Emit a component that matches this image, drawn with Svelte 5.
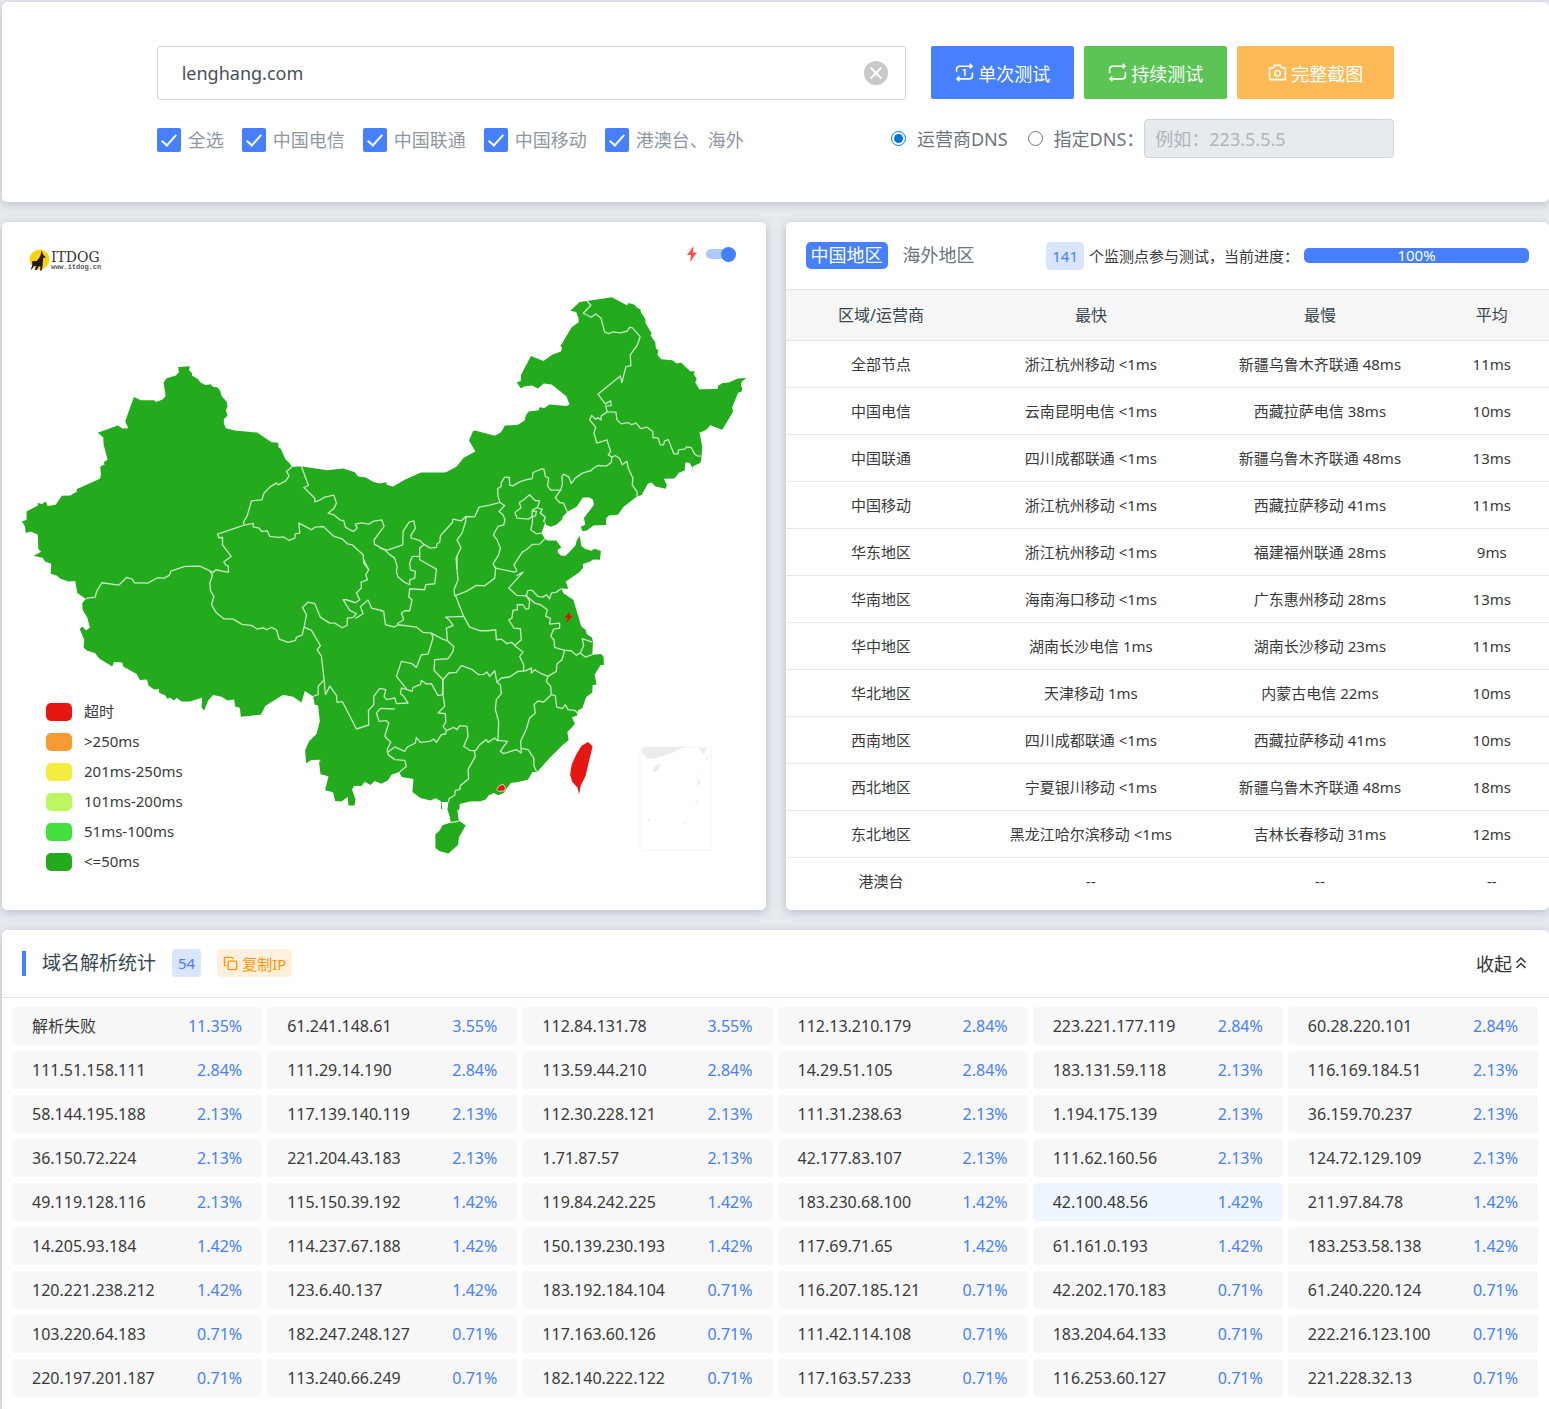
<script lang="ts">
  let domain = 'lenghang.com';
  let dnsMode = 'isp';
  let customDns = '';
  let markers = true;
  let area = 'cn';
  let collapsed = false;

  let lines = [
    { name: '全选', checked: true },
    { name: '中国电信', checked: true },
    { name: '中国联通', checked: true },
    { name: '中国移动', checked: true },
    { name: '港澳台、海外', checked: true },
  ];

  const legend = [
    { label: '超时', color: '#e61610' },
    { label: '>250ms', color: '#f79a33' },
    { label: '201ms-250ms', color: '#f5ed42' },
    { label: '101ms-200ms', color: '#bdf760' },
    { label: '51ms-100ms', color: '#42e03f' },
    { label: '<=50ms', color: '#24aa1d' },
  ];

  const regions = [
    ['全部节点', '浙江杭州移动 <1ms', '新疆乌鲁木齐联通 48ms', '11ms'],
    ['中国电信', '云南昆明电信 <1ms', '西藏拉萨电信 38ms', '10ms'],
    ['中国联通', '四川成都联通 <1ms', '新疆乌鲁木齐联通 48ms', '13ms'],
    ['中国移动', '浙江杭州移动 <1ms', '西藏拉萨移动 41ms', '11ms'],
    ['华东地区', '浙江杭州移动 <1ms', '福建福州联通 28ms', '9ms'],
    ['华南地区', '海南海口移动 <1ms', '广东惠州移动 28ms', '13ms'],
    ['华中地区', '湖南长沙电信 1ms', '湖南长沙移动 23ms', '11ms'],
    ['华北地区', '天津移动 1ms', '内蒙古电信 22ms', '10ms'],
    ['西南地区', '四川成都联通 <1ms', '西藏拉萨移动 41ms', '10ms'],
    ['西北地区', '宁夏银川移动 <1ms', '新疆乌鲁木齐联通 48ms', '18ms'],
    ['东北地区', '黑龙江哈尔滨移动 <1ms', '吉林长春移动 31ms', '12ms'],
    ['港澳台', '--', '--', '--'],
  ];

  const records = [
    ['解析失败', '11.35%'], ['61.241.148.61', '3.55%'], ['112.84.131.78', '3.55%'],
    ['112.13.210.179', '2.84%'], ['223.221.177.119', '2.84%'], ['60.28.220.101', '2.84%'],
    ['111.51.158.111', '2.84%'], ['111.29.14.190', '2.84%'], ['113.59.44.210', '2.84%'],
    ['14.29.51.105', '2.84%'], ['183.131.59.118', '2.13%'], ['116.169.184.51', '2.13%'],
    ['58.144.195.188', '2.13%'], ['117.139.140.119', '2.13%'], ['112.30.228.121', '2.13%'],
    ['111.31.238.63', '2.13%'], ['1.194.175.139', '2.13%'], ['36.159.70.237', '2.13%'],
    ['36.150.72.224', '2.13%'], ['221.204.43.183', '2.13%'], ['1.71.87.57', '2.13%'],
    ['42.177.83.107', '2.13%'], ['111.62.160.56', '2.13%'], ['124.72.129.109', '2.13%'],
    ['49.119.128.116', '2.13%'], ['115.150.39.192', '1.42%'], ['119.84.242.225', '1.42%'],
    ['183.230.68.100', '1.42%'], ['42.100.48.56', '1.42%'], ['211.97.84.78', '1.42%'],
    ['14.205.93.184', '1.42%'], ['114.237.67.188', '1.42%'], ['150.139.230.193', '1.42%'],
    ['117.69.71.65', '1.42%'], ['61.161.0.193', '1.42%'], ['183.253.58.138', '1.42%'],
    ['120.221.238.212', '1.42%'], ['123.6.40.137', '1.42%'], ['183.192.184.104', '0.71%'],
    ['116.207.185.121', '0.71%'], ['42.202.170.183', '0.71%'], ['61.240.220.124', '0.71%'],
    ['103.220.64.183', '0.71%'], ['182.247.248.127', '0.71%'], ['117.163.60.126', '0.71%'],
    ['111.42.114.108', '0.71%'], ['183.204.64.133', '0.71%'], ['222.216.123.100', '0.71%'],
    ['220.197.201.187', '0.71%'], ['113.240.66.249', '0.71%'], ['182.140.222.122', '0.71%'],
    ['117.163.57.233', '0.71%'], ['116.253.60.127', '0.71%'], ['221.228.32.13', '0.71%'],
  ];

  let activeIp = '42.100.48.56';
</script>

<div class="page">
  <section class="card search">
    <div class="search-row">
      <div class="domain">
        <input type="text" aria-label="域名" bind:value={domain} />
        <button class="clear" aria-label="清空" on:click={() => (domain = '')}>
          <svg viewBox="0 0 24 24"><circle cx="12" cy="12" r="12" fill="#c8c8c8" /><path d="M6.500 6.500l11 11M17.500 6.500l-11 11" stroke="#fff" stroke-width="2" /></svg>
        </button>
      </div>
      <div class="buttons">
        <button class="btn blue">
          <svg class="icon" viewBox="0 0 24 24"><path d="M2 11V8a4 4 0 0 1 4-4h15M18.500 1l3 3-3 3M22 12v4a4 4 0 0 1-4 4H3M5.500 17l-3 3 3 3M10 9.500l2.500-1V16" /></svg>单次测试
        </button>
        <button class="btn green">
          <svg class="icon" viewBox="0 0 24 24"><path d="M2 13V8a4 4 0 0 1 4-4h15M18.500 1l3 3-3 3M22 11v5a4 4 0 0 1-4 4H3M5.500 17l-3 3 3 3" /></svg>持续测试
        </button>
        <button class="btn orange">
          <svg class="icon" viewBox="0 0 24 24"><path d="M8.500 3h7l2 3H21a1 1 0 0 1 1 1V20a1 1 0 0 1-1 1H3a1 1 0 0 1-1-1V7a1 1 0 0 1 1-1h3.500z" /><circle cx="12" cy="13" r="3.500" /></svg>完整截图
        </button>
      </div>
    </div>
    <div class="option-row">
      <div class="checks">
        {#each lines as line}
          <label class="check"><input type="checkbox" bind:checked={line.checked} />{line.name}</label>
        {/each}
      </div>
      <div class="dns">
        <label class="radio"><input type="radio" name="dns" value="isp" bind:group={dnsMode} />运营商DNS</label>
        <label class="radio"><input type="radio" name="dns" value="custom" bind:group={dnsMode} />指定DNS：</label>
        <input class="dns-input" type="text" aria-label="指定DNS" placeholder="例如：223.5.5.5" disabled={dnsMode === 'isp'} bind:value={customDns} />
      </div>
    </div>
  </section>

  <div class="columns">
    <section class="card map-card">
      <svg class="map" viewBox="2 222 764 688" role="img" aria-label="中国地图">
        <!-- logo -->
        <circle cx="39.500" cy="259.500" r="10" fill="#fbd20b" />
        <path transform="translate(20 240) scale(.33333)" d="M65 31L62 45 57 55 50 63 36 64 37 76 32 90 38 85 42 78 49 77 44 90 50 90 57 78 61 80 61 93 66 91 68 75 69 60 70 53 78 53 70 44 67 38z" fill="#231815" />
        <text class="logo-name" x="51" y="262">ITDOG</text>
        <text class="logo-url" x="51" y="269">www.itdog.cn</text>

        <path
          class="land"
          d="M22 521.700L26.700 520 26.500 511.700 38 505.700 37.700 503.300 42 504.300 45.700 501.700 47.700 506.300 55.700 505 62 496 70.300 495.700 76.700 492 77 489.300 100 479 101 475 100.300 466.700 104.700 464.700 103.700 462.300 107.700 460 103.700 445 103.300 437.300 97.700 433 118 425.700 122.700 428.700 128.300 428.300 125.300 421.300 134 397 141 400.300 154 400.300 156 402 162.700 399.700 165.700 396 163.700 382.700 166.700 378.300 176 375.700 179 372.300 178.300 367 190 366.300 189 370 192.300 373.300 192 375.500 198 379 200.700 382.700 205.700 385 210.700 384.300 213.300 387 217.300 387.300 220 390.300 222 396.700 226.700 401.700 227.700 406.700 226 410.700 227.700 415.700 224 419.300 224 423.300 226 428.300 235 430.700 257.300 432.700 271.700 442.300 278.300 443 278.700 447.300 281 449 285.300 459 291 465 291.700 467.300 296.700 466.700 302.300 466.700 327.700 470.300 343.300 468.700 355 472.300 358 476.300 366 477.700 373.300 482 380 483.700 386.700 482.300 387 485 393.300 486.700
            405 480 421.300 472.700 445.700 472.700 456.700 467 464 458 475.700 451.700 469.300 440.700 473.300 431.300 475.300 430.700 495 436 501.300 432.300 505.300 425.700 518.300 425 525 420.700 526 416 529 411.700 539 410.300 539.700 407.300 544.700 408 550 404.700 566.700 406 570 404.700 566.700 396.300 552 384.700 544 383.700 538.300 388.700 532.300 385.700 524.300 386.700 521.300 388.700 517 382.300 521 381.300 521.300 375 531.300 356 543.700 361 553 354.700 561.300 351.700 562.500 347.500 560.700 346.700 572 327.300 579 322.300 579 318.700 577.300 314 576.500 312 570.700 310.700 580 302 587.300 301 612.300 297.300 627.300 305.300 629.300 303 635 304.700 637.700 308 641 309.300 641.300 312.300 645.700 319 646 323.300 652 333.300 651 335.500 655.700 342.300 656.300 348.700 658.700 350 658 355 661.700 359.300 672.700 360.300 677.300 363.700 681.300 362.700 691 371.700 695.300 371.300 694.300 374.300 697.300 379.300 695.700 382.300 699.700 389.300 718 389 718.700 385.700 723.300 383 729.300 382.700 738.300 378.700 746.700 378 742.300 381.700 741.300 385 743 389.300 741.700 392 738.700 392.700 732.700 407.300 733.700 411.300 729 419.300 722.700 430 710.700 425.300 706.700 430 700 433 702.700 446.700 702 456.700 701 463 692.700 467 694.700 471.700 690 463 686 462.700 685 470.700 679.300 473 675 478.700 664.300 479 667.300 485.300 666 489 656 486.700 651.700 482.700 648.300 484 642 495.300 637.300 496.700 624 507 618.300 515 609.300 515.700 606.300 519 606.700 525.300 594 525.700 586.700 531 582.700 531.300 581.300 527 585.700 525 584.300 518.300 594.300 505 593.300 500 590 497.700 583.300 497.700 577 507 567.700 512 563.300 516.700 562.300 520 556.700 525 551 527 546.700 525.300 545.700 522.700 541.700 533.300 545.300 539 547.700 540.700 556.700 540.700 561.700 547.700 558 550 558.300 553 561.700 556 566 556 575.700 546 577 541 580 536 581.700 546 585 549 591.700 551 595 549 601.300 551.300 600.300 560 593.300 559.700 590.700 561.700 583.300 564.300
            583.300 568.300 580 572.300 566 582 568.700 589 561.700 588.700 564 593.700 573.700 600 581.700 626.700 586 630 587 634.300 592.300 637.700 593.300 641.700 592.700 655 601.700 654.300 604 657.300 604.300 665.300 601 665.300 595 675 597 685 593 685.300 592.700 692.700 586.700 697.300 582.700 708.300 578.300 710.700 577.300 716 572.300 717.700 575.300 724.300 571.700 728.300 567.700 732.300 569 740.700 563.300 745 550 758.300 541.700 767.700 537.300 772.700 532.700 772.300 528.300 780 518.300 782.300 511 783.300 504 793.300 498.300 795.700 494.300 793.300 489 795.700 486 800 481 801.700 470 802 460 804.300 459.700 810 457.700 810.700 459 821 466 826 459.300 837.700 458.300 845.300 448.700 854 440 851.700 435.700 848.300 435.700 834.700 440 831 442.700 825.700 451 823 450 816.700 447.700 810 448.700 802.300 441.700 802.300 442.700 810 441.300 809.300 441.300 801.700 436 798.700 430.700 801 420.700 798.300 412.700 792.300 413.700 779.300 402 777.300 399.300 772.300 391.700 775 388.300 780.700 381.700 784 375 781.300 370.700 785.300 365 782 361.700 786.300 354.300 786 352.300 790 355.700 800 354.700 806 348.700 806 348 797.300 341.700 802 335.300 801.300 333.300 792.700 325.300 790.700 328.700 776.700 320.700 774.700 319.300 762.700 321 760 311.700 760.300 306.300 763.700 305.300 750.700 309.300 741.700 316.700 734.300 320 721.700 318.300 705.700 315 705 313.300 696.700 305 691.300 301.700 702.700 293.300 697 283.300 695 265.700 706 261 715 241 717 240 708 235.300 706.700 234.300 699.700 227.700 700.700 221.700 697 213.300 695.300 208.300 700.700 204.300 710.700 201.700 707.700 202.300 698 190 701.700 181.700 701.700 176.700 698 174 700.700 170 697.700 167.700 699.300 165 695.300 159.300 693.300 159 689.300 154 689.700 148.700 685.700 147 679.700 140 680.300 136.700 674.300 123.300 666.700 122.300 662.700 114 662 112.300 666.700 99.300 658.700 95 653.300 86.700 650.700 83.700 647.700 84.300 640 79.700 629.300 82.700 626.700 86 630.700 90 627.700 87.300 617.700 82.700 610 82.300 603.300 86 599.300 77.300 593.300 75.300 581.300 68.300 581.700 60 578.700 56.700 575.700 50.700 574 51.300 564 45 561.700 42.700 558 33.700 556 41.300 552 38.300 549.300 38 540 37.700 534.700 30.700 531.700 25.700 533.300 25 526.700z"
        />

        <!-- province borders: north-west -->
        <g class="borders" transform="translate(0 220) scale(.33333)">
          <path d="M875 742L860 755 868 768 858 783 835 795 830 789 810 802 792 821 786 840 755 843 742 888 731 907 733 916 653 943 658 955 668 952 668 975 694 1010 672 1026 677 1035 685 1038 686 1058" />
          <path d="M733 916L760 911 760 921 778 925 785 935 802 933 810 950 837 953 850 951 868 962 885 955 886 942 900 940 897 910 936 930 945 922 957 921 970 920 1003 950 1027 957 1043 972 1057 975 1070 987 1090 1005 1092 1030 1107 1050" />
          <path d="M905 740L926 797 912 803 945 835 945 846 958 842 975 832 1002 826 1010 850 1003 865 985 880 1002 885 1020 900 1032 903 1037 922 1050 930 1062 935 1072 925 1067 913 1085 909 1107 913 1120 905 1146 900 1153 920 1123 960 1124 973 1157 992" />
        </g>
        <!-- north-east -->
        <g class="borders" transform="translate(380 220) scale(.33333)">
          <path d="M622 243L634 256 611 280 635 292 648 282 664 294 675 336 687 341 700 336 722 339 742 334 750 322 758 323 782 350 773 376 752 405 754 437 739 440 727 488 722 468 655 523 677 552 693 543 695 557 678 558 683 576 665 588 664 600 655 594 648 598 636 587 630 600 648 622 643 640 652 670 682 660 693 695 686 705 697 712" />
          <path d="M683 576L709 577 712 600 725 612 745 608 755 614 770 610 783 626 802 622 820 635 820 653 836 655 842 675 852 675 855 663 866 659 883 702 895 702 897 690 918 687 920 681 935 683 945 702 955 709 966 708" />
          <path d="M697 712L707 707 720 716 728 735 742 724 746 745 760 775 758 795 773 817 772 830" />
          <path d="M697 712L695 727 680 739 655 737 640 746 635 752 608 760 587 775 575 791 567 771 552 763 547 770 548 795 543 811 527 833 540 848 552 850 563 876" />
          <path d="M543 811L513 811 504 798 507 775 497 770 493 748 487 747 460 758 458 776 435 781 420 786 400 798 390 796 389 773 375 772 364 790 365 800 354 806 355 830 361 848 330 856 298 862 285 891 258 890 245 903 220 898 218 908 182 948 180 967 172 972 170 983 152 985 133 974 120 962 95 955 93 948 107 925 102 903 88 907 70 935 69 975 23 991 0 985" />
          <path d="M361 848L375 857 358 875 370 885 376 900 372 915 355 920 341 945 352 960 362 985 357 1005 340 1032 347 1045" />
          <path d="M450 825L466 842 480 843 474 862 458 871 457 890 447 898 412 895 406 878 424 864 419 848 432 840zM474 865L488 868 482 880 497 892 492 905 497 908M457 875L470 873 468 888 459 890 458 910 453 930 470 942 485 940" />
          <path d="M496 957L480 973 458 974 440 990 428 997 403 1035 412 1053" />
          <path d="M258 890L258 905 247 940 232 960 244 984 229 1015 232 1050M133 974L120 985 120 1010 97 1010" />
        </g>
        <!-- south-west -->
        <g class="borders" transform="translate(0 540) scale(.33333)">
          <path d="M686 98L648 90 640 98 600 79 555 80 513 94 508 107 493 115 473 114 443 130 403 129 397 118 380 113 357 136 306 129 290 155 286 172 258 176" />
          <path d="M630 95L638 105 630 130 632 153 642 170 635 195 650 220 672 237 700 238 727 254 755 257 772 268 790 264 800 270 815 263 830 270 838 298 855 304 865 308 887 302 890 292 907 286 913 262 935 272 962 318 952 330 965 350 973 420 977 466" />
          <path d="M913 262L920 225 908 203 925 187 945 192 962 233 990 250 1005 250 1027 264 1042 257 1043 235 1060 233 1070 222 1050 212 1030 180 1040 180 1067 189 1080 180 1070 160 1085 145 1084 127 1103 120 1098 105 1107 90 1092 60" />
          <path d="M1067 236L1090 222 1082 200 1105 181 1115 205 1148 213M973 420L955 440 955 465 940 470M977 466L990 439 1010 467 1012 488 1028 486 1070 568 1107 556 1106 512 1122 495 1122 470 1140 446 1158 450 1153 470 1160 480 1185 475 1190 492" />
          <path d="M1185 508L1142 506 1130 520 1138 545 1160 543 1167 550 1155 590 1173 608 1162 630" />
        </g>
        <!-- south-east -->
        <g class="borders" transform="translate(380 540) scale(.33333)">
          <path d="M22 630L25 645 45 660 75 662 80 680 62 695 58 700M25 637L45 622 75 635 83 622 107 610 110 593 122 608 150 605 162 598 170 608 185 585 197 583 200 573 190 560 198 548 197 522 175 520 195 500 190 465 189 420" />
          <path d="M200 573L222 563 232 570 240 558 262 560 265 590 252 620 270 632 288 633 300 615 320 600 325 608 345 595 355 605M283 633L287 650 265 690 267 717 242 738 240 750 227 752 225 767 208 777 206 787" />
          <path d="M355 602L357 545 347 510 350 480 365 462 362 435 352 428 345 393 330 410 322 397 312 404 297 405 275 388 245 378 230 398 207 400 190 420" />
          <path d="M355 602L383 605 362 635 372 642 410 630 425 640 423 605 440 568 450 535 467 520 463 495 475 484 492 487 515 465M425 626L445 630 462 655 463 680 472 698" />
          <path d="M515 465L513 440 500 425 505 410 485 402 465 390 455 400 455 385 435 394 415 395 390 412 365 415 352 428M515 465L527 468 531 502 548 507 557 495 565 510 585 512 597 523" />
          <path d="M505 410L530 395 532 372 547 360 555 332 525 323 523 300 513 290 522 268 540 265 540 250 510 253 512 235 498 230 503 210 483 195 465 190 440 168 450 185 447 207 438 208 430 195 413 195 413 210 400 212 397 235 387 240 403 265 422 267 425 300 405 318 430 337 420 350 432 375 432 393" />
          <path d="M408 318L395 308 382 312 365 298 350 300 348 270 325 273 300 273 270 262 252 230 197 232 208 240 220 258 200 265 203 303 222 320 220 335 205 357 165 360 163 392 190 420 188 465 175 468 155 432 140 433 125 422 122 435 100 443 97 455 82 450 65 445 62 462 72 470 85 490 50 492" />
          <path d="M82 450L50 410 65 365 97 372 110 383 125 345 145 343 160 295 155 280 188 298 203 303M0 212L12 215 17 255 45 262 55 255 110 262 130 278 155 280M52 252L72 240 65 220 75 213 90 213 97 180 87 172 90 147 135 150 138 135 165 132 170 88 120 60 120 50" />
          <path d="M97 50L90 70 92 90 107 95 105 115 90 120 90 135 73 127 55 112 50 97 52 80 45 55 28 43 17 32M232 90L235 120 223 150 225 168 260 155 290 137 315 138 345 115 348 85 345 80M228 168L240 200 252 230M232 88V50" />
          <path d="M348 85L405 97 412 93M410 108L430 97 387 145 412 167 440 168 445 152 458 152 475 170 490 172 500 165 510 177 515 160 530 157 545 146M555 332L575 333 590 347 602 340 617 352 638 345M602 340L612 318 608 297 638 307M210 849L237 845" />
        </g>

        <!-- timed out areas -->
        <path d="M588.300 742.300L593 746.700 591 755 589 763 586 776 581 786 579.500 795 578 788 572.500 782 570.500 775 572 765 577 754 582 746z" fill="#e61610" />
        <path d="M497 790l2.500-4 4-1.500 2.500 4-1.500 3h-6z" fill="#e61610" stroke="#fff" stroke-width=".7" />

        <!-- south china sea inset -->
        <g fill="#ebebeb">
          <rect x="640.500" y="747.500" width="71" height="103" fill="none" stroke="#f4f4f4" />
          <path d="M641 751l5-4h39l-14 7-17 5h-6zM699 748h8l-3 7zM655 766l6-2-3 7-5 2zM706 760l5-6-4 7zM654 783l3 6 1 1zM698 779h2v6l-2 1zM655 806l5-6-3 4zM695 804l4-6-2 5zM683 826l6-9-4 8zM648 819l2 1 1 5zM667 839l6-3-3 2zM700 771l3-5-1 3zM612 735l2-1v1z" />
        </g>
        {#if markers}
          <path d="M570 612l-5 6h3l-1 5 6-7h-3z" fill="#f00" />
        {/if}
      </svg>
      <label class="switch">
        <svg viewBox="0 0 10 16"><path d="M6.500 0L0 9h4l-1 7 7-9.500H6z" fill="#ff5252" /></svg>
        <input type="checkbox" aria-label="显示监测点" bind:checked={markers} />
      </label>
      <ul class="legend">
        {#each legend as item}
          <li><span class="swatch" style="background: {item.color}"></span>{item.label}</li>
        {/each}
      </ul>
    </section>

    <section class="card result">
      <header class="result-head">
        <div class="tabs">
          <button class:active={area === 'cn'} on:click={() => (area = 'cn')}>中国地区</button>
          <button class:active={area === 'sea'} on:click={() => (area = 'sea')}>海外地区</button>
        </div>
        <div class="progress-wrap">
          <span class="badge">141</span>
          <span>个监测点参与测试，当前进度：</span>
          <div class="progress" role="progressbar" aria-label="当前进度" aria-valuenow="100">100%</div>
        </div>
      </header>
      <table>
        <thead>
          <tr><th>区域/运营商</th><th>最快</th><th>最慢</th><th>平均</th></tr>
        </thead>
        <tbody>
          {#each regions as row}
            <tr>
              {#each row as cell}
                <td>{cell}</td>
              {/each}
            </tr>
          {/each}
        </tbody>
      </table>
    </section>
  </div>

  <section class="card stats">
    <header class="stats-head">
      <h2>域名解析统计</h2>
      <span class="badge small">54</span>
      <button class="copy">
        <svg viewBox="0 0 16 16"><path d="M6.500 5.500h7a1 1 0 0 1 1 1v7a1 1 0 0 1-1 1h-7a1 1 0 0 1-1-1v-7a1 1 0 0 1 1-1zM3.500 10.500h-1a1 1 0 0 1-1-1v-7a1 1 0 0 1 1-1h7a1 1 0 0 1 1 1v1" /></svg>复制IP
      </button>
      <button class="fold" on:click={() => (collapsed = !collapsed)}>
        收起<svg viewBox="0 0 12 14"><path d="M1.500 6.500L6 2l4.500 4.500M1.500 12L6 7.500l4.500 4.500" /></svg>
      </button>
    </header>
    {#if !collapsed}
      <ul class="records">
        {#each records as [ip, rate]}
          <li class:active={ip === activeIp}><span>{ip}</span><span class="rate">{rate}</span></li>
        {/each}
      </ul>
    {/if}
  </section>
</div>

<style>
  :global(body) {
    background: #e7ebf0;
  }

  .page {
    display: flex;
    flex-direction: column;
    gap: 20px;
    padding: 2px 0 0 2px;
    font-family: 'Noto Sans', 'Noto Sans CJK SC', sans-serif;
    font-size: 15px;
    line-height: 20px;
    color: #3a3a3a;
  }

  button,
  input {
    font-family: inherit;
    box-sizing: border-box;
  }

  button {
    border: none;
    background: none;
    padding: 0;
    cursor: pointer;
  }

  ul {
    list-style: none;
    margin: 0;
    padding: 0;
  }

  .card {
    background: #fff;
    border-radius: 5px;
    box-shadow: 0 2px 10px rgba(69, 90, 100, 0.3);
  }

  .search {
    padding: 44px 10%;
  }

  .search-row {
    display: flex;
    gap: 25px;
  }

  .domain {
    position: relative;
    flex: 1;
  }

  .domain input {
    width: 100%;
    height: 54px;
    padding: 0 56px 0 24px;
    border: 1px solid #ced4da;
    border-radius: 3px;
    font-size: 18px;
    color: #495057;
  }

  .clear {
    position: absolute;
    top: 15px;
    right: 18px;
    width: 24px;
    height: 24px;
  }

  .clear svg {
    display: block;
  }

  .buttons {
    display: flex;
    gap: 10px;
  }

  .btn {
    display: flex;
    align-items: center;
    justify-content: center;
    gap: 4px;
    height: 53px;
    padding: 0 24px;
    border-radius: 2px;
    font-size: 18px;
    color: #fff;
  }

  .blue {
    background: #4680ff;
  }

  .green {
    background: #5bc455;
  }

  .orange {
    background: #ffb957;
    padding: 0 31px;
  }

  .icon {
    width: 19px;
    height: 19px;
    fill: none;
    stroke: #fff;
    stroke-width: 2;
  }

  .option-row {
    display: flex;
    justify-content: space-between;
    align-items: center;
    margin-top: 19px;
    font-size: 18px;
  }

  .checks,
  .dns {
    display: flex;
    align-items: center;
  }

  .checks {
    gap: 18px;
    padding-top: 2px;
    color: #8f989f;
  }

  .check {
    display: flex;
    align-items: center;
    gap: 7px;
  }

  .check input {
    appearance: none;
    width: 24px;
    height: 24px;
    margin: 0;
    border-radius: 2px;
    background: #fff;
    box-shadow: inset 0 0 0 1px #ced4da;
  }

  .check input:checked {
    background: #4680ff;
    box-shadow: none;
  }

  .check input:checked::after {
    content: '';
    display: block;
    width: 6px;
    height: 13px;
    margin: 3px 0 0 8px;
    border: solid #fff;
    border-width: 0 2px 2px 0;
    transform: rotate(42deg);
  }

  .dns {
    color: #6c757d;
  }

  .radio {
    display: flex;
    align-items: center;
    gap: 11px;
    margin-right: 20px;
  }

  .radio + .radio {
    margin-right: 0;
  }

  .radio input {
    width: 15px;
    height: 15px;
    margin: 0;
    accent-color: #0078d7;
  }

  .dns-input {
    width: 250px;
    height: 39px;
    padding: 0 10px;
    border: 1px solid #ced4da;
    border-radius: 4px;
    font-size: 18px;
  }

  .dns-input:disabled {
    background: #e7ebee;
  }

  .dns-input::placeholder {
    color: #adb5bd;
  }

  .columns {
    display: grid;
    grid-template-columns: 1fr 1fr;
    gap: 20px;
  }

  .map-card {
    position: relative;
  }

  .map {
    display: block;
    width: 100%;
  }

  .logo-name {
    font: 14px 'DejaVu Serif', serif;
    fill: #3e3332;
  }

  .logo-url {
    font: bold 7px 'Liberation Mono', monospace;
    fill: #595757;
  }

  .land {
    fill: #24aa1d;
  }

  .borders path {
    fill: none;
    stroke: #c4e8c0;
    stroke-width: 4;
    stroke-linejoin: round;
  }

  .switch {
    position: absolute;
    top: 24px;
    right: 30px;
    display: flex;
    align-items: center;
    gap: 9px;
  }

  .switch svg {
    width: 10px;
    height: 16px;
  }

  .switch input {
    appearance: none;
    display: flex;
    align-items: center;
    width: 30px;
    height: 10px;
    margin: 0;
    border-radius: 5px;
    background: #b0c9ff;
  }

  .switch input::after {
    content: '';
    width: 15px;
    height: 15px;
    border-radius: 50%;
    background: #4680ff;
  }

  .switch input:checked::after {
    margin-left: auto;
  }

  .legend {
    position: absolute;
    left: 44px;
    bottom: 34px;
  }

  .legend li {
    display: flex;
    align-items: center;
    gap: 12px;
    height: 30px;
  }

  .swatch {
    width: 26px;
    height: 18px;
    margin-top: 3px;
    border-radius: 5px;
  }

  .result-head {
    display: flex;
    align-items: center;
    justify-content: space-between;
    height: 67px;
    padding: 0 20px;
    border-bottom: 1px solid #e2e5e8;
  }

  .tabs {
    display: flex;
    gap: 10px;
  }

  .tabs button {
    height: 27px;
    padding: 0 5px;
    border-radius: 5px;
    font-size: 18px;
    line-height: 27px;
    color: #6c757d;
  }

  .tabs .active {
    background: #4680ff;
    color: #fff;
  }

  .progress-wrap {
    display: flex;
    align-items: center;
    gap: 5px;
  }

  .badge {
    padding: 0 6px;
    border-radius: 4px;
    background: #dae6ff;
    font-size: 15px;
    line-height: 28px;
    color: #4680ff;
  }

  .progress {
    width: 225px;
    height: 15px;
    border-radius: 5px;
    background: #4680ff;
    line-height: 15px;
    text-align: center;
    color: #fff;
  }

  table {
    width: 100%;
    table-layout: fixed;
    border-collapse: collapse;
    text-align: center;
  }

  th {
    height: 50px;
    padding: 0;
    border-bottom: 1px solid #e2e5e8;
    background: #f6f6f6;
    font-size: 16px;
    font-weight: 400;
    color: #37474f;
  }

  th:nth-child(1) {
    width: 25%;
  }

  th:nth-child(2),
  th:nth-child(3) {
    width: 30%;
  }

  td {
    height: 46px;
    padding: 0;
    border-bottom: 1px solid #e2e8ec;
  }

  tr:last-child td {
    border-bottom: none;
  }

  .stats {
    border-radius: 5px 5px 0 0;
  }

  .stats-head {
    display: flex;
    align-items: center;
    height: 67px;
    padding: 0 22px 0 20px;
    border-bottom: 1px solid #e2e5e8;
  }

  h2 {
    margin: 0;
    padding-left: 16px;
    border-left: 4px solid #4680ff;
    font-size: 19px;
    font-weight: 400;
    line-height: 25px;
    color: #37474f;
  }

  .small {
    margin-left: 16px;
  }

  .copy {
    display: flex;
    align-items: center;
    gap: 4px;
    height: 28px;
    margin-left: 16px;
    padding: 0 6px;
    border-radius: 4px;
    background: #fff0dd;
    font-size: 15px;
    color: #ff9800;
  }

  .copy svg {
    width: 15px;
    height: 15px;
    fill: none;
    stroke: #ff9800;
    stroke-width: 1.5;
  }

  .fold {
    display: flex;
    align-items: center;
    gap: 3px;
    margin-left: auto;
    font-size: 18px;
    color: #333;
  }

  .fold svg {
    width: 12px;
    height: 14px;
    fill: none;
    stroke: #333;
    stroke-width: 1.5;
  }

  .records {
    display: grid;
    grid-template-columns: repeat(6, 1fr);
    gap: 6px 5px;
    padding: 9px 11px 12px 10px;
    font-size: 16px;
  }

  .records li {
    display: flex;
    align-items: center;
    justify-content: space-between;
    height: 38px;
    padding: 0 20px;
    border-radius: 4px;
    background: #f7f7f7;
  }

  .records .active {
    background: #eff6ff;
  }

  .rate {
    color: #4680ff;
  }
</style>
